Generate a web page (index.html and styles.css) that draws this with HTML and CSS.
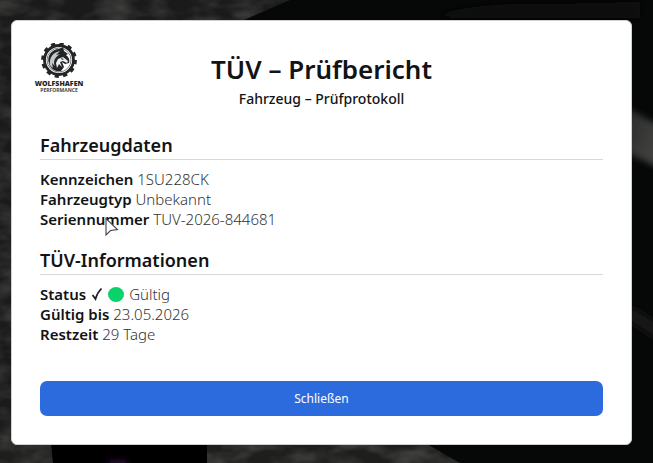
FILE: index.html
```html
<!DOCTYPE html>
<html lang="de">
<head>
<meta charset="utf-8">
<meta name="viewport" content="width=device-width, initial-scale=1">
<title>TÜV – Prüfbericht</title>
<link rel="stylesheet" href="styles.css">
</head>
<body>
<svg class="scene" viewBox="0 0 653 463" preserveAspectRatio="none" aria-hidden="true">
  <defs>
    <filter id="soft"><feGaussianBlur stdDeviation="3"/></filter>
    <filter id="grain" x="0" y="0" width="100%" height="100%">
      <feTurbulence type="fractalNoise" baseFrequency="0.03 0.06" numOctaves="3" seed="4" result="noise"/>
      <feColorMatrix in="noise" values="0 0 0 0 0.2  0 0 0 0 0.2  0 0 0 0 0.19  0.8 0 0 0 -0.3" result="tint"/>
      <feComposite in="tint" in2="SourceGraphic" operator="in"/>
    </filter>
    <linearGradient id="trim" x1="0" y1="0" x2="1" y2="0.6">
      <stop offset="0" stop-color="#242524"/><stop offset="1" stop-color="#424240"/>
    </linearGradient>
  </defs>
  <rect width="653" height="463" fill="#060707"/>
  <path d="M0 0H290L235 24H14V440L60 463H0Z" fill="#191a19"/>
  <path d="M0 440H51L53 463H0ZM207 440H420L460 463H207Z" fill="#1e1f1d"/>
  <path d="M0 0H290L235 24H14V440H51L53 463H0ZM207 440H420L460 463H207Z" filter="url(#grain)"/>
  <path d="M51 440H207V463H53Z" fill="#000"/>
  <g filter="url(#soft)">
    <path d="M440 14Q480 2 560 4L640 2V18H450Z" fill="#101110"/>
    <path d="M620 104L660 126V168L620 150Z" fill="url(#trim)"/>
    <path d="M630 305L660 324V342L630 322Z" fill="#141515"/>
    <ellipse cx="118" cy="463" rx="12" ry="4" fill="#220829"/>
  </g>
</svg>

<main class="report">
  <header class="report-header">
    <svg class="logo" viewBox="0 0 52 52" role="img" aria-label="Wolfshafen Performance">
      <g transform="translate(26 17)">
        <circle r="14.500" fill="none" stroke="#222527" stroke-width="2.800"/>
        <circle r="16.300" fill="none" stroke="#222527" stroke-width="3.200" stroke-dasharray="4.200 4.334"/>
        <circle r="12" fill="none" stroke="#7e8284" stroke-width="1"/>
        <path d="M-10 4C-13-4-7-11 0-11L4-13 5-9 9-6 7-5C10-3 11 0 10 3L6 4 3 2 5 7 2 11C-4 12-8 9-10 4Z" fill="#222527"/>
        <path d="M-9 1C-8-6-3-8 1-9L-3-5 1-6C-5-2-6 2-4 6L-7 3-6 8C-9 6-10 4-9 1Z" fill="#c5c8c9"/>
        <path d="M-1-1L4-3 9 1 8 3 4 1 1 2 3 7 0 4-2 8-3 3Z" fill="#eef0f0"/>
        <path d="M2-2L5-1 3 0Z" fill="#222527"/>
      </g>
      <text class="logo-name" x="26" y="43" text-anchor="middle">WOLFSHAFEN</text>
      <text class="logo-sub" x="26" y="49" text-anchor="middle">PERFORMANCE</text>
    </svg>
    <h1>TÜV – Prüfbericht</h1>
    <p class="subtitle">Fahrzeug – Prüfprotokoll</p>
  </header>

  <section class="group">
    <h2>Fahrzeugdaten</h2>
    <p><strong>Kennzeichen</strong> 1SU228CK</p>
    <p><strong>Fahrzeugtyp</strong> Unbekannt</p>
    <p><strong>Seriennummer</strong> TUV-2026-844681</p>
  </section>

  <section class="group">
    <h2>TÜV-Informationen</h2>
    <p class="status"><strong>Status</strong>
      <svg class="check" viewBox="0 0 12 14" aria-hidden="true"><path d="M1.500 8L4.500 12Q6 6 10.500 1.500" fill="none" stroke="#1b1d1f" stroke-width="1.700"/></svg>
      <span class="dot"></span>
      <span>Gültig</span></p>
    <p><strong>Gültig bis</strong> 23.05.2026</p>
    <p><strong>Restzeit</strong> 29 Tage</p>
  </section>

  <button class="close" type="button">Schließen</button>
</main>

<svg class="pointer" viewBox="0 0 16 20" aria-hidden="true"><path d="M2 1.500V18L6.500 13.500 13.500 12.500Z" fill="#fff" stroke="#444" stroke-width="1.100"/></svg>
</body>
</html>
```
FILE: styles.css
```css
* {
  box-sizing: border-box;
}

body {
  margin: 0;
  min-height: 100vh;
  padding: 20px 21px 18px 11px;
  background: #060707;
  color: #111315;
  font: 300 15px/20px "Noto Sans", "Open Sans", sans-serif;
}

.scene {
  position: fixed;
  inset: 0;
  z-index: -1;
  width: 100%;
  height: 100%;
}

.report {
  position: relative;
  padding: 28px;
  border: 1px solid #d0d0d0;
  border-radius: 6px;
  background: #fff;
}

.report-header {
  margin-bottom: 24px;
  text-align: center;
}

.logo {
  position: absolute;
  top: 22px;
  left: 21px;
  width: 52px;
  height: 52px;
}

.logo-name {
  fill: #222527;
  font: 800 7px "Open Sans", sans-serif;
}

.logo-sub {
  fill: #444;
  font: 700 5px "Open Sans", sans-serif;
}

h1,
h2,
p {
  margin: 0;
}

h1 {
  font-size: 26px;
  font-weight: 600;
  line-height: 40px;
}

.subtitle {
  font-size: 14px;
  font-weight: 500;
}

h2 {
  margin-bottom: 9px;
  padding-bottom: 2px;
  border-bottom: 1px solid #d8d8d8;
  font-size: 18px;
  font-weight: 600;
  line-height: 24px;
}

strong {
  font-weight: 600;
}

.group {
  margin-bottom: 19px;
  color: #333;
}

.group h2,
.group strong {
  color: #111315;
}

.status {
  display: flex;
  align-items: center;
  gap: 5px;
}

.check {
  width: 12px;
  height: 14px;
}

.dot {
  width: 16px;
  height: 15px;
  border-radius: 50%;
  background: #08d269;
}

.close {
  display: block;
  width: 100%;
  height: 35px;
  margin-top: 37px;
  padding: 0;
  border: 0;
  border-radius: 7px;
  background: #2c6bdd;
  color: #fff;
  font: 400 12px/20px "Noto Sans", "Open Sans", sans-serif;
}

.pointer {
  position: absolute;
  top: 217px;
  left: 104px;
  width: 16px;
  height: 20px;
}
```
